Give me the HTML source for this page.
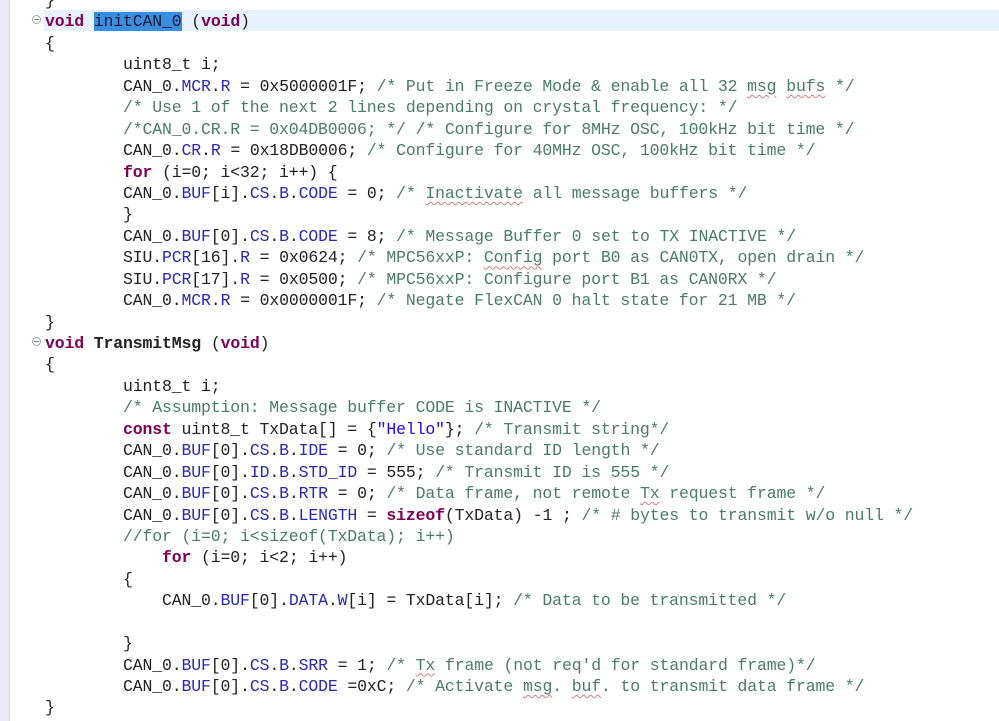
<!DOCTYPE html>
<html><head><meta charset="utf-8"><style>
html,body{margin:0;padding:0;background:#fff;width:999px;height:721px;overflow:hidden;position:relative}
.strip{position:absolute;left:0;top:0;width:9px;height:721px;background:#e9e9f5;border-right:1px solid #d6d6e6}
.cur{position:absolute;left:44px;top:10px;width:955px;height:21px;background:#e8f2fe}
.code{position:absolute;left:45px;top:-10px;font-family:"Liberation Mono",monospace;font-size:16.5px;letter-spacing:-0.15px;line-height:21.44px;color:#222;white-space:pre}
.k{color:#7f0055;font-weight:bold}
.c{color:#4b7d66}
.f{color:#2a2ab4}
.s{color:#2a00ff}
.sel{background:#3a8ee0;color:#1a1a3a}
.u{text-decoration:underline wavy #d08080;text-decoration-thickness:1px;text-underline-offset:3px}
.fold{position:absolute;left:32px;width:7px;height:7px;border:1px solid #9aa;border-radius:50%;background:#fff}
.fold:after{content:"";position:absolute;left:1px;top:3px;width:5px;height:1px;background:#788}
</style></head><body>
<div class="strip"></div>
<div class="cur"></div>
<div class="fold" style="top:15px"></div>
<div class="fold" style="top:337px"></div>
<div class="code">}
<span class="k">void</span> <span class="sel">initCAN_0</span> (<span class="k">void</span>)
{
        uint8_t i;
        CAN_0.<span class="f">MCR</span>.<span class="f">R</span> = 0x5000001F; <span class="c">/* Put in Freeze Mode &amp; enable all 32 <span class="u">msg</span> <span class="u">bufs</span> */</span>
        <span class="c">/* Use 1 of the next 2 lines depending on crystal frequency: */</span>
        <span class="c">/*CAN_0.CR.R = 0x04DB0006; */ /* Configure for 8MHz OSC, 100kHz bit time */</span>
        CAN_0.<span class="f">CR</span>.<span class="f">R</span> = 0x18DB0006; <span class="c">/* Configure for 40MHz OSC, 100kHz bit time */</span>
        <span class="k">for</span> (i=0; i&lt;32; i++) {
        CAN_0.<span class="f">BUF</span>[i].<span class="f">CS</span>.<span class="f">B</span>.<span class="f">CODE</span> = 0; <span class="c">/* <span class="u">Inactivate</span> all message buffers */</span>
        }
        CAN_0.<span class="f">BUF</span>[0].<span class="f">CS</span>.<span class="f">B</span>.<span class="f">CODE</span> = 8; <span class="c">/* Message Buffer 0 set to TX INACTIVE */</span>
        SIU.<span class="f">PCR</span>[16].<span class="f">R</span> = 0x0624; <span class="c">/* MPC56xxP: <span class="u">Config</span> port B0 as CAN0TX, open drain */</span>
        SIU.<span class="f">PCR</span>[17].<span class="f">R</span> = 0x0500; <span class="c">/* MPC56xxP: Configure port B1 as CAN0RX */</span>
        CAN_0.<span class="f">MCR</span>.<span class="f">R</span> = 0x0000001F; <span class="c">/* Negate FlexCAN 0 halt state for 21 MB */</span>
}
<span class="k">void</span> <b>TransmitMsg</b> (<span class="k">void</span>)
{
        uint8_t i;
        <span class="c">/* Assumption: Message buffer CODE is INACTIVE */</span>
        <span class="k">const</span> uint8_t TxData[] = {<span class="s">"Hello"</span>}; <span class="c">/* Transmit string*/</span>
        CAN_0.<span class="f">BUF</span>[0].<span class="f">CS</span>.<span class="f">B</span>.<span class="f">IDE</span> = 0; <span class="c">/* Use standard ID length */</span>
        CAN_0.<span class="f">BUF</span>[0].<span class="f">ID</span>.<span class="f">B</span>.<span class="f">STD_ID</span> = 555; <span class="c">/* Transmit ID is 555 */</span>
        CAN_0.<span class="f">BUF</span>[0].<span class="f">CS</span>.<span class="f">B</span>.<span class="f">RTR</span> = 0; <span class="c">/* Data frame, not remote <span class="u">Tx</span> request frame */</span>
        CAN_0.<span class="f">BUF</span>[0].<span class="f">CS</span>.<span class="f">B</span>.<span class="f">LENGTH</span> = <span class="k">sizeof</span>(TxData) -1 ; <span class="c">/* # bytes to transmit w/o null */</span>
        <span class="c">//for (i=0; i&lt;sizeof(TxData); i++)</span>
            <span class="k">for</span> (i=0; i&lt;2; i++)
        {
            CAN_0.<span class="f">BUF</span>[0].<span class="f">DATA</span>.<span class="f">W</span>[i] = TxData[i]; <span class="c">/* Data to be transmitted */</span>

        }
        CAN_0.<span class="f">BUF</span>[0].<span class="f">CS</span>.<span class="f">B</span>.<span class="f">SRR</span> = 1; <span class="c">/* <span class="u">Tx</span> frame (not req'd for standard frame)*/</span>
        CAN_0.<span class="f">BUF</span>[0].<span class="f">CS</span>.<span class="f">B</span>.<span class="f">CODE</span> =0xC; <span class="c">/* Activate <span class="u">msg</span>. <span class="u">buf</span>. to transmit data frame */</span>
}
</div>
</body></html>
